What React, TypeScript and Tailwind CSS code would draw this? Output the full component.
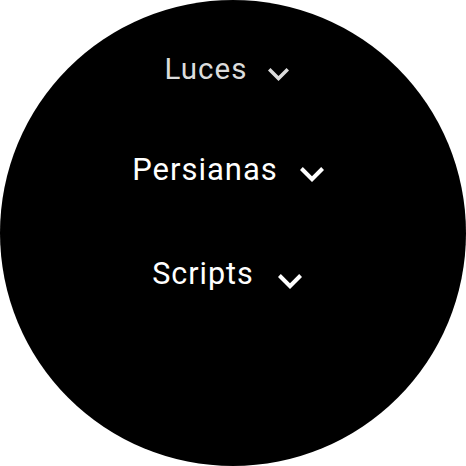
import React from "react";

// material "expand_more", cropped to the stroke
const Chevron: React.FC<{ className?: string }> = ({ className }) => (
	<svg viewBox="6 8.59 12 7.41" className={className} fill="currentColor">
		<path d="M16.59 8.59L12 13.17 7.41 8.59 6 10l6 6 6-6z" />
	</svg>
);

export default function App() {
	return (
		<div className="w-[466px] h-[466px] bg-white" style={{ fontFamily: "Roboto, sans-serif" }}>
			<div className="w-full h-full rounded-full bg-black flex flex-col items-center">
				{/* Luces, a bit smaller and dimmer at the top edge */}
				<div className="flex items-start gap-[21px] mt-[55px] mr-[12px] text-[#dcdcdc] text-[29.5px] leading-none h-[30px] tracking-[1px]">
					<span>Luces</span>
					<Chevron className="w-[21px] h-[13px] mt-[13px]" />
				</div>
				<div className="flex items-start gap-[22px] mt-[69px] mr-[10px] text-white text-[31px] leading-none h-[31px] tracking-[1px]">
					<span>Persianas</span>
					<Chevron className="w-[24px] h-[15px] mt-[13px]" />
				</div>
				<div className="flex items-start gap-[24px] mt-[74px] mr-[12px] text-white text-[30.5px] leading-none h-[31px] tracking-[1px]">
					<span>Scripts</span>
					<Chevron className="w-[24px] h-[15px] mt-[15px]" />
				</div>
			</div>
		</div>
	);
}
